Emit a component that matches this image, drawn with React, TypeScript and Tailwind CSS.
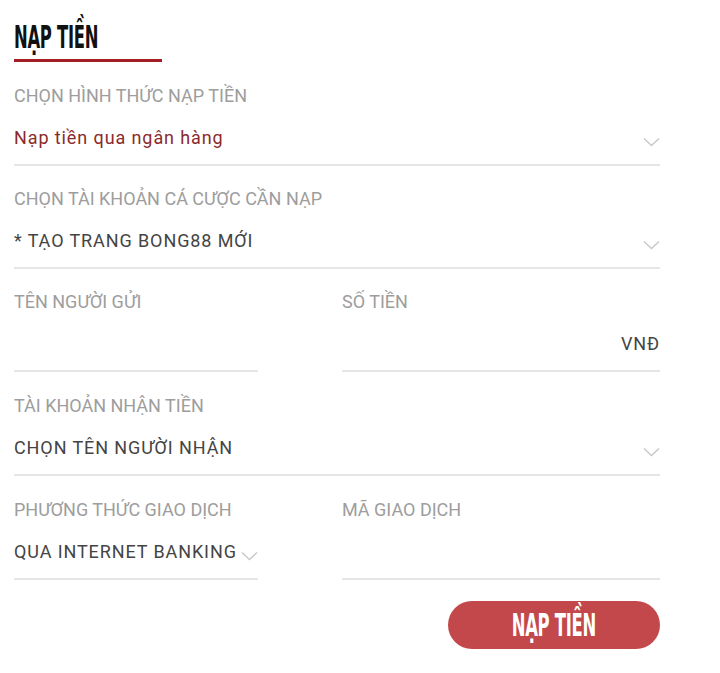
import { ReactNode } from "react";

function Chevron() {
  return (
    <svg width="17" height="10" viewBox="0 0 17 10" fill="none" className="shrink-0">
      <path d="M1 1.5 L8.5 8.5 L16 1.5" stroke="#c8c8c8" strokeWidth="1.4" />
    </svg>
  );
}

interface FieldProps {
  label: string;
  children?: ReactNode;
  className?: string;
}

function Field({ label, children, className }: FieldProps) {
  return (
    <div className={`pb-[14px] border-b-2 border-[#e6e6e6] ${className ?? "pt-[21px]"}`}>
      <div className="h-6 leading-6 text-[18px] text-[#9d9d9d] whitespace-nowrap">{label}</div>
      <div className="mt-[18px] h-6 leading-6 text-[18px] tracking-[0.9px] text-[#444] flex items-center">
        {children}
      </div>
    </div>
  );
}

export default function App() {
  return (
    <div className="w-[720px] h-[673px] bg-white font-['Roboto',sans-serif]">
      <div className="pl-[14px] pr-[60px] pt-[15px]">
        {/* Title */}
        <div className="h-[44px] flex items-center">
          <h1 className="font-['DejaVu_Sans_Condensed','DejaVu_Sans',sans-serif] font-bold text-[32px] leading-none text-[#111] scale-x-[0.57] origin-left tracking-[-0.5px] whitespace-nowrap">
            NẠP TIỀN
          </h1>
        </div>
        <div className="w-[148px] h-[3px] mb-px bg-[#a31f24]" />

        <Field label="CHỌN HÌNH THỨC NẠP TIỀN">
          <span className="text-[#8b2a2c]">Nạp tiền qua ngân hàng</span>
          <span className="ml-auto pt-2"><Chevron /></span>
        </Field>

        <Field label="CHỌN TÀI KHOẢN CÁ CƯỢC CẦN NẠP">
          <span>* TẠO TRANG BONG88 MỚI</span>
          <span className="ml-auto pt-2"><Chevron /></span>
        </Field>

        <div className="flex gap-[84px]">
          <Field label="TÊN NGƯỜI GỬI" className="pt-[21px] w-[244px]" />
          <Field label="SỐ TIỀN" className="pt-[21px] flex-1">
            <span className="ml-auto">VNĐ</span>
          </Field>
        </div>

        <Field label="TÀI KHOẢN NHẬN TIỀN" className="pt-[22px]">
          <span>CHỌN TÊN NGƯỜI NHẬN</span>
          <span className="ml-auto pt-2"><Chevron /></span>
        </Field>

        <div className="flex gap-[84px]">
          <Field label="PHƯƠNG THỨC GIAO DỊCH" className="pt-[22px] w-[244px]">
            <span className="whitespace-nowrap">QUA INTERNET BANKING</span>
            <span className="ml-auto pt-2"><Chevron /></span>
          </Field>
          <Field label="MÃ GIAO DỊCH" className="pt-[22px] flex-1" />
        </div>

        <div className="flex justify-end pt-[21px]">
          <button className="w-[212px] h-[48px] rounded-full bg-[#c2484b] flex items-center justify-center">
            <span className="font-['DejaVu_Sans_Condensed','DejaVu_Sans',sans-serif] font-bold text-[32px] leading-none text-white scale-x-[0.57] tracking-[-0.5px] whitespace-nowrap">
              NẠP TIỀN
            </span>
          </button>
        </div>
      </div>
    </div>
  );
}
